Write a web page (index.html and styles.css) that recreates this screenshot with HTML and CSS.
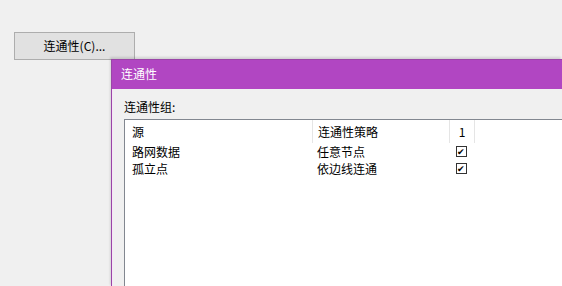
FILE: index.html
```html
<!DOCTYPE html>
<html lang="zh-CN">
<head>
    <meta charset="UTF-8">
    <title>连通性</title>
    <link rel="stylesheet" href="styles.css">
</head>
<body>
    <div class="desk">
        <button class="open-button">连通性(C)...</button>

        <!-- dialog -->
        <div class="dialog">
            <div class="title-bar">连通性</div>
            <div class="dialog-body">
                <div class="group-label">连通性组:</div>
                <div class="list-box">
                    <div class="list-header">
                        <div class="col col-src">源</div>
                        <div class="col col-policy">连通性策略</div>
                        <div class="col col-num">1</div>
                        <div class="col col-rest"></div>
                    </div>
                    <div class="list-row">
                        <div class="col col-src">路网数据</div>
                        <div class="col col-policy">任意节点</div>
                        <div class="col col-num"><span class="check">&#10004;</span></div>
                    </div>
                    <div class="list-row">
                        <div class="col col-src">孤立点</div>
                        <div class="col col-policy">依边线连通</div>
                        <div class="col col-num"><span class="check">&#10004;</span></div>
                    </div>
                </div>
            </div>
        </div>
    </div>
</body>
</html>
```

FILE: styles.css
```css
body, html {
    margin: 0;
    padding: 0;
    height: 100%;
    overflow: hidden;
    background-color: #f0f0f0;
    font-family: "Noto Sans CJK SC", "Liberation Sans", sans-serif;
    font-size: 12px;
    color: #000;
}

.desk {
    padding: 32px 0 0 14px;
}

.open-button {
    display: block;
    width: 121px;
    height: 28px;
    margin: 0;
    padding: 0 0 2px 0;
    border: 1px solid #adadad;
    background-color: #e1e1e1;
    font-family: inherit;
    font-size: 12px;
    color: #000;
}

.dialog {
    margin: -1px 0 0 97px;
    height: 227px;
    border-left: 1px solid #9a45a8;
    border-top: 1px solid #9a45a8;
    box-shadow: -1px -2px 2px rgba(0, 0, 0, 0.12);
    background-color: #f0f0f0;
}

.title-bar {
    height: 29px;
    line-height: 28px;
    padding-left: 9px;
    background-color: #b146c2;
    color: #fff;
    font-size: 12px;
}

.dialog-body {
    padding: 11px 0 0 11px;
    border-left: 1px solid #f7e6f7;
}

.group-label {
    line-height: 14px;
    margin-bottom: 5px;
}

.list-box {
    height: 166px;
    background-color: #fff;
    border-top: 1px solid #828790;
    border-left: 1px solid #828790;
}

.list-header, .list-row {
    display: flex;
}

.list-header {
    height: 23px;
    line-height: 23px;
}

.list-header .col {
    border-right: 1px solid #e5e5e5;
}

.list-row {
    height: 17px;
    line-height: 17px;
}

.col-src {
    width: 180px;
    padding-left: 7px;
}

.col-policy {
    width: 131px;
    padding-left: 5px;
}

.col-num {
    width: 24px;
    text-align: center;
}

.list-header .col-rest {
    border-right: none;
}

.check {
    display: inline-block;
    width: 9px;
    height: 9px;
    margin: 3px 0 0 2px;
    border: 1px solid #333;
    font-size: 9px;
    line-height: 9px;
    text-align: center;
    color: #000;
    vertical-align: top;
}
```
